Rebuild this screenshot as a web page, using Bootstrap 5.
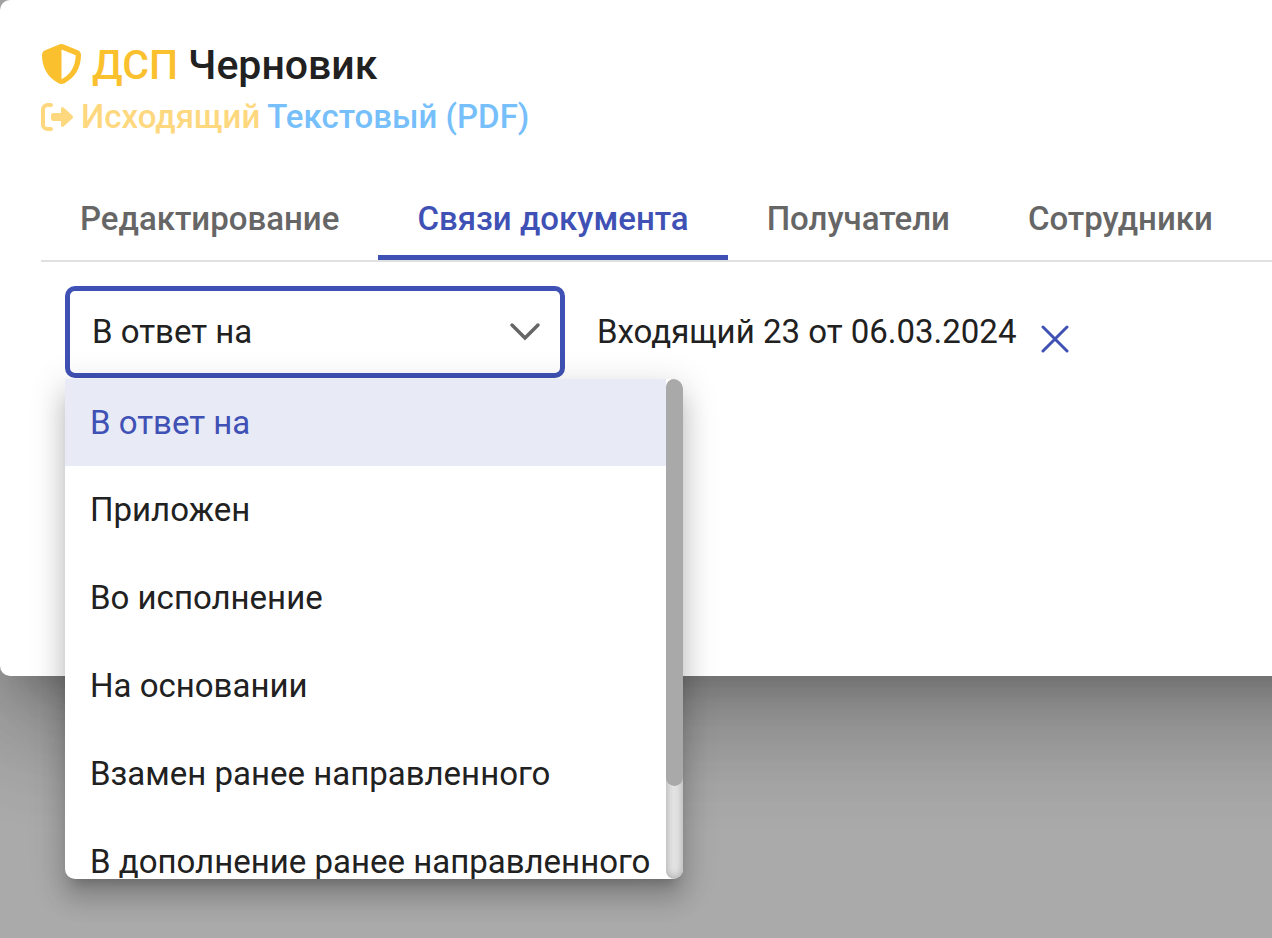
<!DOCTYPE html>
<html lang="ru">
<head>
<meta charset="utf-8">
<meta name="viewport" content="width=device-width, initial-scale=1">
<title>Черновик</title>
<link href="https://cdn.jsdelivr.net/npm/bootstrap@5.3.0/dist/css/bootstrap.min.css" rel="stylesheet">
<style>
  :root { --accent: #3f51b5; --ink: #212121; --amber: #fbc02d; }
  body { font-family: Roboto, "Liberation Sans", sans-serif; font-size: 33px; line-height: 40px; color: var(--ink); background: #aaa; }
  .dialog-panel { min-height: 676px; margin-right: -120px; padding: 40px 0 24px 41px; background: #fff; border-radius: 10px;
    box-shadow: 0 28px 38px -18px rgba(0,0,0,.2), 0 60px 95px 8px rgba(0,0,0,.14), 0 22px 115px 20px rgba(0,0,0,.12); }
  .doc-title { gap: 10px; font-size: 41px; line-height: 50px; font-weight: 500; }
  .doc-kind { gap: 7px; font-size: 33px; line-height: 40px; font-weight: 500; margin-top: 7px; }
  .tone-amber { color: var(--amber); }
  .tone-outgoing { color: #fdd87f; }
  .tone-text { color: #76bffa; }
  .doc-tabs { margin-top: 40px; border-bottom: 2px solid #e0e0e0; }
  .doc-tabs .nav-link { height: 83px; padding: 5px 39px 0; font-weight: 500; color: #666; background: transparent; border: 0; border-bottom: 5px solid transparent; border-radius: 0; white-space: nowrap; }
  .doc-tabs .nav-link.active { color: var(--accent); border-bottom-color: var(--accent); }
  .links-row { padding: 24px 24px 0; }
  .relation-box { width: 500px; }
  .relation-select { height: 92px; padding: 0 80px 0 22px; font-size: 33px; line-height: 40px; color: var(--ink); background: transparent none; border: 5px solid var(--accent); border-radius: 10px; }
  .relation-select:focus { box-shadow: none; border-color: var(--accent); }
  .relation-chevron { position: absolute; right: 24px; top: 36px; pointer-events: none; }
  .relation-drop { position: absolute; top: 93px; left: 0; width: 618px; height: 500px; background: #fff; border-radius: 0 10px 10px 10px; overflow: hidden; z-index: 5;
    box-shadow: 0 12px 12px -8px rgba(0,0,0,.2), 0 20px 25px 2px rgba(0,0,0,.14), 0 8px 35px 5px rgba(0,0,0,.12); }
  .option-list { overflow: hidden; }
  .option-list button { height: 88px; padding: 0 25px; border: 0; background: transparent; color: var(--ink); line-height: 32px; text-align: left; white-space: nowrap; flex: none; }
  .option-list button.chosen { height: 87px; color: var(--accent); background: #e8eaf6; }
  .scroll-track { width: 17px; border-radius: 9px; background: #e6e6e6; box-shadow: inset 0 0 10px rgba(0,0,0,.3); }
  .scroll-thumb { height: 407px; border-radius: 9px; background: #a9a9a9; }
  .remove-link { width: 28px; height: 28px; margin: 14px 0 0 25px; }
</style>
</head>
<body>
<div class="min-vh-100 overflow-hidden">
<main class="dialog-panel">
  <h1 class="doc-title d-flex align-items-center mb-0">
    <svg width="41" height="42" viewBox="0 0 41 42" aria-hidden="true"><path fill="#fbc02d" fill-rule="evenodd" d="M20.500 0q1.200 0 2.300.5l14 5.800q3.200 1.400 3.200 4.700c0 12-5.500 22.500-16.500 28.200q-3 1.600-6 0C6.500 33.500 1 23 1 11q0-3.300 3.200-4.700l14-5.800q1.100-.5 2.300-.5Zm0 5.500v29.800C29.800 30.800 34.500 22 34.700 11.300Z"/></svg>
    <span class="tone-amber">ДСП</span><span>Черновик</span>
  </h1>
  <h2 class="doc-kind d-flex align-items-center mb-0">
    <svg width="33" height="30" viewBox="0 0 33 30" aria-hidden="true"><path d="M10 3H6.500a4.500 4.500 0 0 0-4.500 4.500v15A4.500 4.500 0 0 0 6.500 27H10" fill="none" stroke="#fdd87f" stroke-width="4" stroke-linecap="round"/><path fill="#fdd87f" d="M12.500 11H20V7q0-2.800 2.600-1.600l9 8.300q1.200 1.300 0 2.600l-9 8.300Q20 25.800 20 23v-4h-7.500q-2.500 0-2.500-2.500v-3q0-2.500 2.500-2.500Z"/></svg>
    <span class="tone-outgoing">Исходящий</span><span class="tone-text">Текстовый (PDF)</span>
  </h2>
  <nav class="nav doc-tabs flex-nowrap" role="tablist">
    <button type="button" class="nav-link" role="tab">Редактирование</button>
    <button type="button" class="nav-link active" role="tab" aria-selected="true">Связи документа</button>
    <button type="button" class="nav-link" role="tab">Получатели</button>
    <button type="button" class="nav-link" role="tab">Сотрудники</button>
  </nav>
  <div class="links-row d-flex align-items-center">
    <div class="relation-box position-relative flex-shrink-0">
      <select class="form-select relation-select" aria-label="Тип связи">
        <option selected>В ответ на</option>
        <option>Приложен</option>
        <option>Во исполнение</option>
        <option>На основании</option>
        <option>Взамен ранее направленного</option>
        <option>В дополнение ранее направленного</option>
      </select>
      <svg class="relation-chevron" width="32" height="20" viewBox="0 0 32 20" aria-hidden="true"><path d="M3 3l13 13L29 3" fill="none" stroke="#666" stroke-width="3.500" stroke-linecap="round"/></svg>
      <div class="relation-drop d-flex">
        <div class="option-list d-flex flex-column flex-grow-1" role="listbox" aria-label="Тип связи">
          <button type="button" class="chosen" role="option" aria-selected="true">В ответ на</button>
          <button type="button" role="option">Приложен</button>
          <button type="button" role="option">Во исполнение</button>
          <button type="button" role="option">На основании</button>
          <button type="button" role="option">Взамен ранее направленного</button>
          <button type="button" role="option">В дополнение ранее направленного</button>
        </div>
        <div class="scroll-track flex-shrink-0"><div class="scroll-thumb"></div></div>
      </div>
    </div>
    <span class="text-nowrap ms-4 ps-2">Входящий 23 от 06.03.2024</span>
    <button type="button" class="btn remove-link d-flex p-0 border-0" aria-label="Удалить связь">
      <svg width="28" height="28" viewBox="0 0 28 28" aria-hidden="true"><path d="M2 2l24 24M26 2L2 26" stroke="#3f51b5" stroke-width="3" stroke-linecap="round"/></svg>
    </button>
  </div>
</main>
</div>
<script src="https://cdn.jsdelivr.net/npm/bootstrap@5.3.0/dist/js/bootstrap.bundle.min.js"></script>
</body>
</html>
